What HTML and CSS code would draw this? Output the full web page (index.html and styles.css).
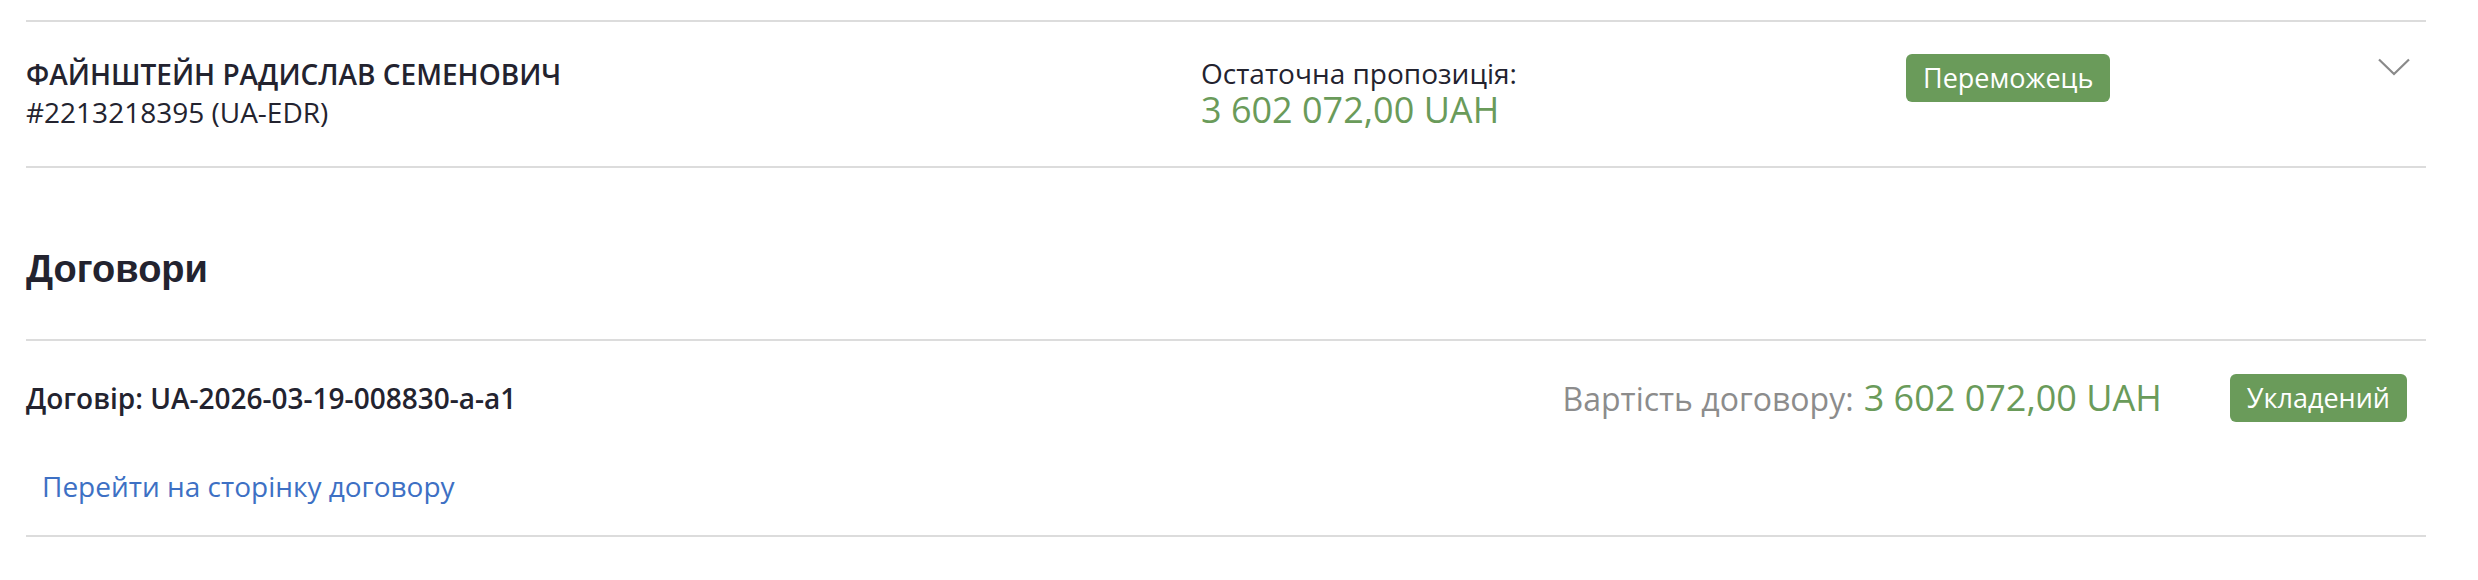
FILE: index.html
```html
<!DOCTYPE html>
<html lang="uk">
<head>
<meta charset="utf-8">
<title>Учасник та договори</title>
<link rel="stylesheet" href="styles.css">
</head>
<body>
<div class="page">
  <div class="bid-row">
    <div class="bidder">
      <div class="bidder-name">ФАЙНШТЕЙН РАДИСЛАВ СЕМЕНОВИЧ</div>
      <div class="bidder-id">#2213218395 (UA-EDR)</div>
    </div>
    <div class="offer">
      <div class="offer-label">Остаточна пропозиція:</div>
      <div class="offer-amount">3 602 072,00 UAH</div>
    </div>
    <div class="status">
      <span class="badge">Переможець</span>
    </div>
    <div class="toggle">
      <svg class="chevron" width="32" height="18" viewBox="0 0 32 18" aria-hidden="true">
        <path d="M1 1.5 L16 16 L31 1.5" fill="none" stroke="#8a8a8a" stroke-width="2.2"/>
      </svg>
    </div>
  </div>

  <h2 class="section-title">Договори</h2>

  <div class="contract">
    <div class="contract-head">
      <div class="contract-id">Договір: UA-2026-03-19-008830-a-a1</div>
      <div class="contract-meta">
        <span class="contract-value"><span class="value-label">Вартість договору:</span><span class="value-amount">3 602 072,00 UAH</span></span>
        <span class="badge">Укладений</span>
      </div>
    </div>
    <a class="contract-link" href="#">Перейти на сторінку договору</a>
  </div>
</div>
</body>
</html>
```

FILE: styles.css
```css
html, body {
  margin: 0;
  padding: 0;
  background: #ffffff;
}

body {
  font-family: "Open Sans", "Noto Sans", "DejaVu Sans", sans-serif;
  color: #23232f;
}

.page {
  padding: 20px 52px 0 26px;
}

.bid-row {
  display: grid;
  grid-template-columns: 1175px 705px 1fr auto;
  align-items: start;
  border-top: 2px solid #dcdcdc;
  border-bottom: 2px solid #dcdcdc;
  padding: 33px 0 35px;
}

.bidder-name {
  font-size: 28px;
  font-weight: 600;
  line-height: 38px;
}

.bidder-id {
  font-size: 28px;
  line-height: 38px;
}

.offer-label {
  font-size: 28px;
  line-height: 36px;
}

.offer-amount {
  font-size: 36px;
  line-height: 38px;
  color: #6a9b5a;
}

.status {
  margin-top: -1px;
}

.badge {
  display: inline-block;
  background: #6a9b5a;
  color: #ffffff;
  font-size: 27px;
  line-height: 48px;
  padding: 0 17px;
  border-radius: 6px;
}

.toggle {
  padding: 3px 16px 0 0;
}

.chevron {
  display: block;
}

.section-title {
  font-family: "Liberation Sans", Arial, sans-serif;
  font-weight: 700;
  font-size: 38px;
  line-height: 46px;
  margin: 78px 0 47px;
  color: #23232f;
}

.contract {
  border-top: 2px solid #dcdcdc;
  border-bottom: 2px solid #dcdcdc;
  padding: 32px 0 30px;
}

.contract-head {
  display: flex;
  align-items: center;
  justify-content: space-between;
}

.contract-id {
  font-size: 28px;
  font-weight: 600;
  line-height: 38px;
}

.contract-meta {
  display: flex;
  align-items: center;
  gap: 68px;
  padding-right: 19px;
}

.contract-value {
  display: flex;
  align-items: baseline;
  gap: 10px;
}

.value-label {
  font-size: 32px;
  color: #8c8c8c;
}

.value-amount {
  font-size: 36px;
  color: #6a9b5a;
}

.contract-link {
  display: block;
  margin-top: 45px;
  padding-left: 16px;
  font-size: 28px;
  line-height: 38px;
  color: #3d70c4;
  text-decoration: none;
}
```
